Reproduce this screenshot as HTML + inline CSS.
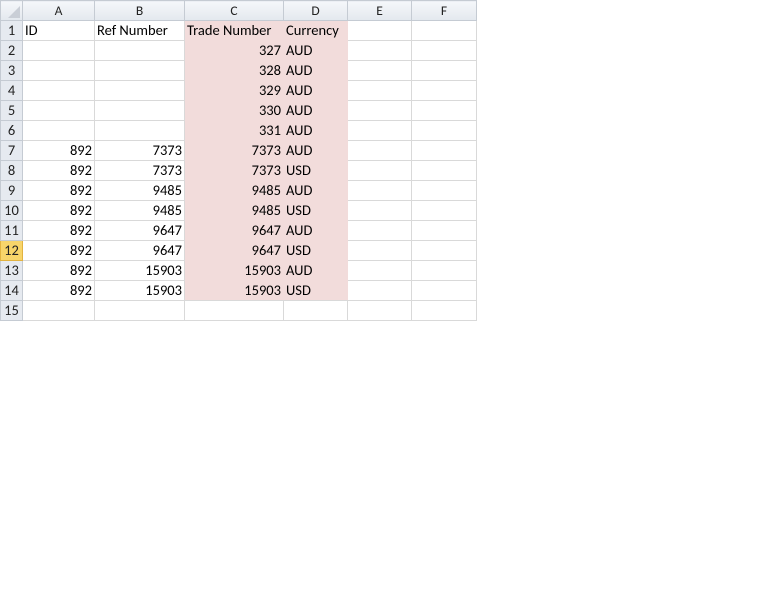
<!DOCTYPE html>
<html><head><style>
body{margin:0;background:#fff;width:768px;height:614px;overflow:hidden;font-family:Calibri,"Liberation Sans",sans-serif;font-size:14.5px;}
table{border-collapse:collapse;table-layout:fixed;position:absolute;left:0;top:0;}
td{height:19px;max-height:19px;padding:0 2px;border:1px solid #d9d9d9;white-space:nowrap;overflow:hidden;color:#000;line-height:19px;box-sizing:border-box;}
tr{height:20px;}
td.h{background:linear-gradient(#f5f7fa,#e3e8ee);border-color:#c5cbd3;text-align:center;color:#222;font-size:13.5px;}
td.r{background:#e6eaf0;border-color:#c5cbd3;text-align:center;padding:0;color:#222;}
td.sel{background:#f8d56a;border-color:#e2b340;}
td.n{text-align:right;}
td.p{background:#f2dcdb;border-color:#f2dcdb;}
tr.last td.p{border-bottom-color:#d9d9d9;}
</style></head><body>
<table>
<colgroup><col style="width:22px"><col style="width:72px"><col style="width:90px"><col style="width:99px"><col style="width:64px"><col style="width:64px"><col style="width:65px"></colgroup>
<tr><td class="h" style="position:relative"><svg width="12" height="12" style="position:absolute;right:2px;bottom:2px"><polygon points="12,0 12,12 0,12" fill="#c9ced6"/></svg></td><td class="h">A</td><td class="h">B</td><td class="h">C</td><td class="h">D</td><td class="h">E</td><td class="h">F</td></tr>
<tr><td class="r">1</td><td>ID</td><td>Ref Number</td><td class="p">Trade Number</td><td class="p">Currency</td><td></td><td></td></tr>
<tr><td class="r">2</td><td></td><td></td><td class="p n">327</td><td class="p">AUD</td><td></td><td></td></tr>
<tr><td class="r">3</td><td></td><td></td><td class="p n">328</td><td class="p">AUD</td><td></td><td></td></tr>
<tr><td class="r">4</td><td></td><td></td><td class="p n">329</td><td class="p">AUD</td><td></td><td></td></tr>
<tr><td class="r">5</td><td></td><td></td><td class="p n">330</td><td class="p">AUD</td><td></td><td></td></tr>
<tr><td class="r">6</td><td></td><td></td><td class="p n">331</td><td class="p">AUD</td><td></td><td></td></tr>
<tr><td class="r">7</td><td class="n">892</td><td class="n">7373</td><td class="p n">7373</td><td class="p">AUD</td><td></td><td></td></tr>
<tr><td class="r">8</td><td class="n">892</td><td class="n">7373</td><td class="p n">7373</td><td class="p">USD</td><td></td><td></td></tr>
<tr><td class="r">9</td><td class="n">892</td><td class="n">9485</td><td class="p n">9485</td><td class="p">AUD</td><td></td><td></td></tr>
<tr><td class="r">10</td><td class="n">892</td><td class="n">9485</td><td class="p n">9485</td><td class="p">USD</td><td></td><td></td></tr>
<tr><td class="r">11</td><td class="n">892</td><td class="n">9647</td><td class="p n">9647</td><td class="p">AUD</td><td></td><td></td></tr>
<tr><td class="r sel">12</td><td class="n">892</td><td class="n">9647</td><td class="p n">9647</td><td class="p">USD</td><td></td><td></td></tr>
<tr><td class="r">13</td><td class="n">892</td><td class="n">15903</td><td class="p n">15903</td><td class="p">AUD</td><td></td><td></td></tr>
<tr class="last"><td class="r">14</td><td class="n">892</td><td class="n">15903</td><td class="p n">15903</td><td class="p">USD</td><td></td><td></td></tr>
<tr><td class="r">15</td><td></td><td></td><td></td><td></td><td></td><td></td></tr>
</table>
</body></html>
